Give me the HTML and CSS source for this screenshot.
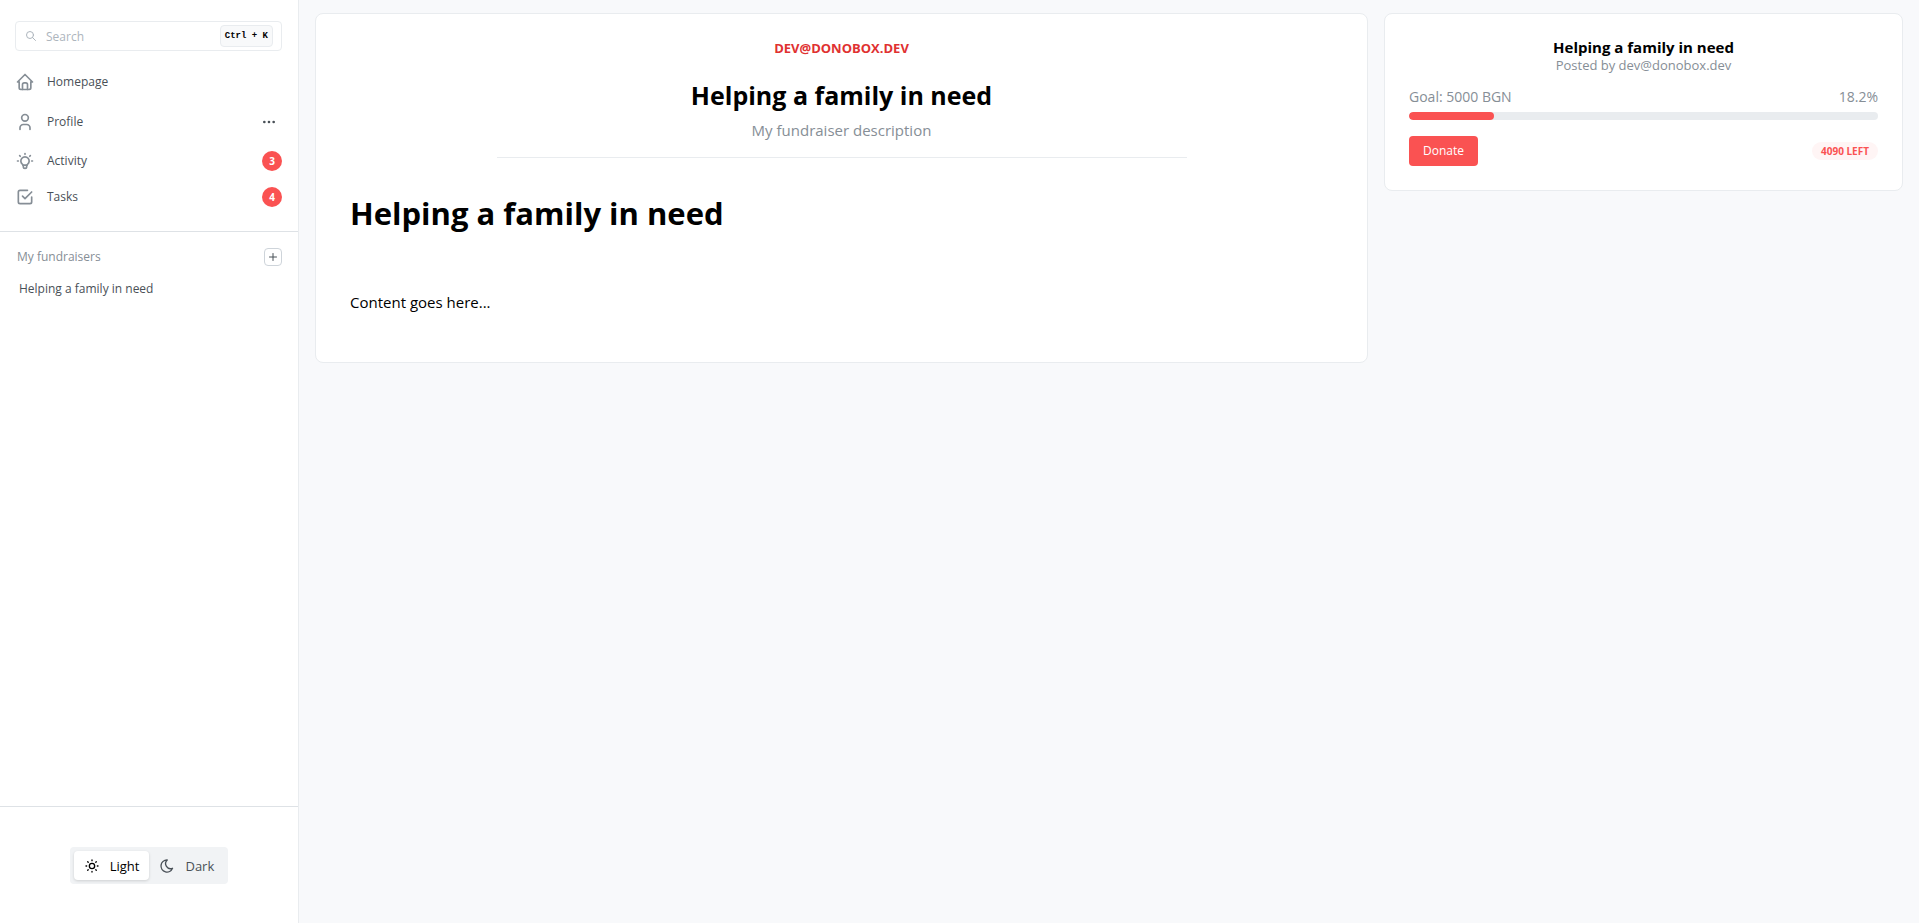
FILE: index.html
```html
<!DOCTYPE html>
<html lang="en">
<head>
<meta charset="utf-8">
<meta name="viewport" content="width=device-width, initial-scale=1">
<title>Helping a family in need</title>
<link rel="stylesheet" href="styles.css">
</head>
<body>
<div class="shell">
  <aside class="sidebar">
    <div class="sidebar-top">
      <div class="search">
        <svg class="icon icon-search" viewBox="0 0 24 24" aria-hidden="true"><circle cx="10" cy="10" r="7"/><path d="M21 21l-6-6"/></svg>
        <input class="search-input" type="search" placeholder="Search" aria-label="Search">
        <kbd class="shortcut">Ctrl + K</kbd>
      </div>
      <nav class="nav">
        <a class="nav-link nav-link-tall" href="#">
          <svg class="icon" viewBox="0 0 24 24" aria-hidden="true"><path d="M5 12H3l9-9 9 9h-2"/><path d="M5 12v7a2 2 0 0 0 2 2h10a2 2 0 0 0 2-2v-7"/><path d="M9 21v-6a2 2 0 0 1 2-2h2a2 2 0 0 1 2 2v6"/></svg>
          <span>Homepage</span>
        </a>
        <div class="nav-row">
          <a class="nav-link nav-link-tall" href="#">
            <svg class="icon" viewBox="0 0 24 24" aria-hidden="true"><circle cx="12" cy="7" r="4"/><path d="M6 21v-2a4 4 0 0 1 4-4h4a4 4 0 0 1 4 4v2"/></svg>
            <span>Profile</span>
          </a>
          <button class="more" type="button" aria-label="Profile options">
            <svg class="icon icon-more" viewBox="0 0 24 24" aria-hidden="true"><circle cx="5" cy="12" r="1"/><circle cx="12" cy="12" r="1"/><circle cx="19" cy="12" r="1"/></svg>
          </button>
        </div>
        <a class="nav-link" href="#">
          <svg class="icon" viewBox="0 0 24 24" aria-hidden="true"><path d="M3 12h1m8-9v1m8 8h1M5.600 5.600l.7.7m12.100-.7l-.7.7"/><path d="M9 16a5 5 0 1 1 6 0a3.500 3.500 0 0 0-1 3a2 2 0 0 1-4 0a3.500 3.500 0 0 0-1-3"/><path d="M9.700 17h4.600"/></svg>
          <span>Activity</span>
          <span class="count">3</span>
        </a>
        <a class="nav-link" href="#">
          <svg class="icon" viewBox="0 0 24 24" aria-hidden="true"><path d="M9 11l3 3 8-8"/><path d="M20 12v6a2 2 0 0 1-2 2H6a2 2 0 0 1-2-2V6a2 2 0 0 1 2-2h9"/></svg>
          <span>Tasks</span>
          <span class="count">4</span>
        </a>
      </nav>
    </div>
    <section class="collection">
      <div class="collection-head">
        <span>My fundraisers</span>
        <button class="add" type="button" aria-label="Create fundraiser">
          <svg class="icon icon-add" viewBox="0 0 24 24" aria-hidden="true"><path d="M12 5v14M5 12h14"/></svg>
        </button>
      </div>
      <a class="collection-link" href="#">Helping a family in need</a>
    </section>
    <footer class="sidebar-foot">
      <div class="scheme">
        <button class="scheme-item scheme-item-active" type="button" aria-pressed="true">
          <svg class="icon icon-scheme" viewBox="0 0 24 24" aria-hidden="true"><circle cx="12" cy="12" r="4"/><path d="M3 12h1m8-9v1m8 8h1m-9 8v1M5.600 5.600l.7.7m12.100-.7l-.7.7m0 11.400l.7.7m-12.100-.7l-.7.7"/></svg>
          <span>Light</span>
        </button>
        <button class="scheme-item" type="button" aria-pressed="false">
          <svg class="icon icon-scheme" viewBox="0 0 24 24" aria-hidden="true"><path d="M12 3h.393a7.500 7.500 0 0 0 7.920 12.446a9 9 0 1 1-8.313-12.454z"/></svg>
          <span>Dark</span>
        </button>
      </div>
    </footer>
  </aside>

  <main class="main">
    <article class="card post">
      <header class="post-head">
        <p class="author">DEV@DONOBOX.DEV</p>
        <h2 class="post-title">Helping a family in need</h2>
        <p class="post-summary">My fundraiser description</p>
      </header>
      <div class="post-body">
        <h1 class="body-title">Helping a family in need</h1>
        <p class="body-text">Content goes here...</p>
      </div>
    </article>

    <section class="card goal">
      <h3 class="goal-title">Helping a family in need</h3>
      <p class="goal-author">Posted by dev@donobox.dev</p>
      <div class="goal-row goal-figures">
        <span>Goal: 5000 BGN</span>
        <span>18.2%</span>
      </div>
      <div class="bar" role="progressbar" aria-label="Raised" aria-valuenow="18.2" aria-valuemin="0" aria-valuemax="100">
        <div class="bar-fill" style="width: 18.2%"></div>
      </div>
      <div class="goal-row">
        <button class="donate" type="button">Donate</button>
        <span class="left">4090 LEFT</span>
      </div>
    </section>
  </main>
</div>
</body>
</html>
```

FILE: styles.css
```css
* {
  box-sizing: border-box;
}

body {
  margin: 0;
  background: #f8f9fb;
  color: #000;
  font-family: "Open Sans", "Noto Sans", sans-serif;
  font-size: 15px;
  line-height: 24px;
}

h1, h2, h3, p {
  margin: 0;
}

a {
  color: inherit;
  text-decoration: none;
}

button {
  border: 0;
  padding: 0;
  background: none;
  color: inherit;
  font: inherit;
  cursor: pointer;
}

.shell {
  display: flex;
  min-height: 100vh;
}

.icon {
  flex: none;
  width: 20px;
  height: 20px;
  fill: none;
  stroke: #868e96;
  stroke-width: 2;
  stroke-linecap: round;
  stroke-linejoin: round;
}

/* Sidebar */

.sidebar {
  display: flex;
  flex: none;
  flex-direction: column;
  width: 299px;
  border-right: 1px solid #e9ecef;
  background: #fff;
  color: #495057;
  font-size: 12px;
  line-height: 18px;
}

.sidebar-top {
  padding: 21px 16px 16px 15px;
  border-bottom: 1px solid #dee2e6;
}

.search {
  display: flex;
  align-items: center;
  height: 30px;
  padding: 0 8px 0 9px;
  border: 1px solid #e9ecef;
  border-radius: 4px;
}

.icon-search {
  width: 12px;
  height: 12px;
  stroke: #adb5bd;
}

.search-input {
  flex: 1;
  min-width: 0;
  height: 28px;
  padding: 0 9px;
  border: 0;
  outline: 0;
  background: none;
  color: #000;
  font: inherit;
}

.search-input::placeholder {
  color: #adb5bd;
}

.shortcut {
  padding: 0 4px;
  border: 1px solid #e9ecef;
  border-radius: 4px;
  background: #f8f9fa;
  color: #000;
  font-family: "Liberation Mono", monospace;
  font-size: 9px;
  font-weight: 700;
  line-height: 20px;
}

.nav {
  display: flex;
  flex-direction: column;
  padding-top: 11px;
}

.nav-row {
  display: flex;
  align-items: center;
  padding-bottom: 1px;
}

.nav-link {
  display: flex;
  flex: 1;
  align-items: center;
  gap: 12px;
  min-height: 36px;
}

.nav-link-tall {
  min-height: 40px;
}

.more {
  display: flex;
  padding: 5px;
}

.icon-more {
  width: 16px;
  height: 16px;
  stroke: #495057;
}

.count {
  width: 20px;
  margin-left: auto;
  border-radius: 10px;
  background: #fa5252;
  color: #fff;
  font-size: 10px;
  font-weight: 700;
  line-height: 20px;
  text-align: center;
}

.collection {
  padding: 16px 16px 16px 17px;
}

.collection-head {
  display: flex;
  align-items: center;
  justify-content: space-between;
  color: #868e96;
}

.add {
  display: grid;
  width: 18px;
  height: 18px;
  border: 1px solid #ced4da;
  border-radius: 4px;
  place-items: center;
}

.icon-add {
  width: 12px;
  height: 12px;
  stroke: #495057;
}

.collection-link {
  display: block;
  padding: 14px 2px 8px;
}

.sidebar-foot {
  display: flex;
  justify-content: center;
  margin-top: auto;
  padding: 40px 16px 39px;
  border-top: 1px solid #dee2e6;
}

.scheme {
  display: flex;
  padding: 4px;
  border-radius: 4px;
  background: #f1f3f5;
  font-size: 13px;
}

.scheme-item {
  display: flex;
  align-items: center;
  gap: 10px;
  height: 29px;
  padding: 0 10px;
  border-radius: 4px;
}

.scheme-item-active {
  background: #fff;
  box-shadow: 0 1px 3px rgba(0, 0, 0, 0.15);
  color: #000;
}

.icon-scheme {
  width: 16px;
  height: 16px;
  stroke: currentColor;
}

/* Main area */

.main {
  display: grid;
  flex: 1;
  grid-template-columns: minmax(0, 1053fr) minmax(0, 519fr);
  gap: 16px;
  align-items: start;
  padding: 13px 16px;
}

.card {
  border: 1px solid #e9ecef;
  border-radius: 8px;
  background: #fff;
}

.post {
  padding: 25px 8px 48px;
}

.post-head {
  width: 66.667%;
  margin: 0 auto;
  padding-bottom: 15px;
  border-bottom: 1px solid #e9ecef;
  text-align: center;
}

.author {
  color: #e03131;
  font-size: 13px;
  font-weight: 700;
  line-height: 18px;
}

.post-title {
  padding-top: 20px;
  font-size: 25px;
  line-height: 36px;
}

.post-summary {
  padding-top: 5px;
  color: #868e96;
}

.post-body {
  padding: 33px 26px 0;
}

.body-title {
  font-size: 31px;
  line-height: 44px;
}

.body-text {
  padding-top: 55px;
}

.goal {
  padding: 24px;
}

.goal-title {
  font-size: 15px;
  line-height: 18px;
  text-align: center;
}

.goal-author {
  color: #868e96;
  font-size: 13px;
  line-height: 18px;
  text-align: center;
}

.goal-row {
  display: flex;
  align-items: center;
  justify-content: space-between;
}

.goal-figures {
  padding: 12px 0 4px;
  color: #868e96;
  font-size: 14px;
  line-height: 22px;
}

.bar {
  height: 8px;
  margin-bottom: 16px;
  overflow: hidden;
  border-radius: 4px;
  background: #e9ecef;
}

.bar-fill {
  height: 100%;
  border-radius: 4px;
  background: #fa5252;
}

.donate {
  height: 30px;
  padding: 0 14px;
  border-radius: 4px;
  background: #fa5252;
  color: #fff;
  font-size: 12px;
}

.left {
  padding: 0 9px;
  border-radius: 9px;
  background: #fff5f5;
  color: #fa5252;
  font-size: 10px;
  font-weight: 700;
  line-height: 18px;
}
```
